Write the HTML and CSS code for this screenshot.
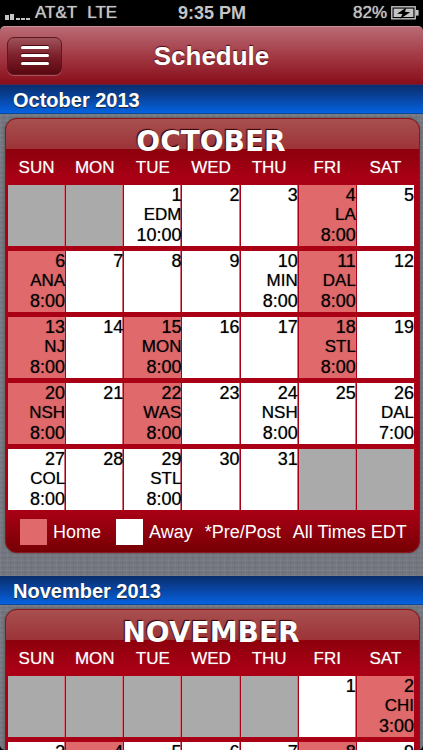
FILE: index.html
```
<!doctype html>
<html lang="en">
	<head>
		<meta charset="utf-8">
		<meta name="viewport" content="width=device-width, initial-scale=1">
		<title>Schedule</title>
		<link rel="stylesheet" href="styles.css">
	</head>
	<body>
		<div id="statusbar">
			<div class="carrier">
				<svg width="26" height="8" viewBox="0 0 26 8" fill="#c4c4c4">
					<rect x="0" y="1" width="4" height="5"/>
					<rect x="5" y="0" width="4" height="6"/>
					<rect x="11" y="4" width="4" height="2"/>
					<rect x="16" y="4" width="4" height="2"/>
					<rect x="21" y="4" width="4" height="2"/>
				</svg>
				<span>AT&amp;T</span>
				<span class="network">LTE</span>
			</div>
			<span class="clock">9:35 PM</span>
			<div class="battery">
				<span>82%</span>
				<svg width="28" height="14" viewBox="0 0 28 14">
					<rect x="0.8" y="0.8" width="23.4" height="12" fill="none" stroke="#c4c4c4" stroke-width="1.4"/>
					<path d="M25 4h2.6v5.6H25z" fill="#c4c4c4"/>
					<rect x="2.6" y="2.6" width="19.8" height="8.4" fill="#c4c4c4"/>
					<path d="M15.5 1.6L6 7.8l5.4.3-2.2 4.6 10-6.5-5.4-.4z" fill="#000"/>
				</svg>
			</div>
		</div>

		<header id="navbar">
			<button id="menu" aria-label="Menu"><span></span><span></span><span></span></button>
			<h1>Schedule</h1>
		</header>

		<main>
			<h2>October 2013</h2>
			<div class="card">
				<table>
					<caption>OCTOBER</caption>
					<thead>
						<tr><th>SUN</th><th>MON</th><th>TUE</th><th>WED</th><th>THU</th><th>FRI</th><th>SAT</th></tr>
					</thead>
					<tbody>
						<tr>
							<td class="empty"></td>
							<td class="empty"></td>
							<td>1<div class="team">EDM</div>10:00</td>
							<td>2</td>
							<td>3</td>
							<td class="home">4<div class="team">LA</div>8:00</td>
							<td>5</td>
						</tr>
						<tr>
							<td class="home">6<div class="team">ANA</div>8:00</td>
							<td>7</td>
							<td>8</td>
							<td>9</td>
							<td>10<div class="team">MIN</div>8:00</td>
							<td class="home">11<div class="team">DAL</div>8:00</td>
							<td>12</td>
						</tr>
						<tr>
							<td class="home">13<div class="team">NJ</div>8:00</td>
							<td>14</td>
							<td class="home">15<div class="team">MON</div>8:00</td>
							<td>16</td>
							<td>17</td>
							<td class="home">18<div class="team">STL</div>8:00</td>
							<td>19</td>
						</tr>
						<tr>
							<td class="home">20<div class="team">NSH</div>8:00</td>
							<td>21</td>
							<td class="home">22<div class="team">WAS</div>8:00</td>
							<td>23</td>
							<td>24<div class="team">NSH</div>8:00</td>
							<td>25</td>
							<td>26<div class="team">DAL</div>7:00</td>
						</tr>
						<tr>
							<td>27<div class="team">COL</div>8:00</td>
							<td>28</td>
							<td>29<div class="team">STL</div>8:00</td>
							<td>30</td>
							<td>31</td>
							<td class="empty"></td>
							<td class="empty"></td>
						</tr>
					</tbody>
				</table>
				<div class="legend">
					<span class="swatch home"></span>
					<span>Home</span>
					<span class="swatch away"></span>
					<span>Away</span>
					<span class="note">*Pre/Post</span>
					<span class="note">All Times EDT</span>
				</div>
			</div>

			<h2>November 2013</h2>
			<div class="card">
				<table>
					<caption>NOVEMBER</caption>
					<thead>
						<tr><th>SUN</th><th>MON</th><th>TUE</th><th>WED</th><th>THU</th><th>FRI</th><th>SAT</th></tr>
					</thead>
					<tbody>
						<tr>
							<td class="empty"></td>
							<td class="empty"></td>
							<td class="empty"></td>
							<td class="empty"></td>
							<td class="empty"></td>
							<td>1</td>
							<td class="home">2<div class="team">CHI</div>3:00</td>
						</tr>
						<tr>
							<td>3</td>
							<td class="home">4</td>
							<td>5</td>
							<td>6</td>
							<td>7</td>
							<td class="home">8</td>
							<td>9</td>
						</tr>
					</tbody>
				</table>
			</div>
		</main>
	</body>
</html>
```

FILE: styles.css
```
* {
	box-sizing: border-box;
}

html, body {
	margin: 0;
	padding: 0;
	height: 100%;
	background: #000;
	font-family: "Liberation Sans", Arial, sans-serif;
}

body {
	display: flex;
	flex-direction: column;
	overflow: hidden;
}

/* status bar */
#statusbar {
	flex: none;
	height: 26px;
	padding: 0 4px 0 5px;
	display: grid;
	grid-template-columns: 1fr auto 1fr;
	align-items: center;
	color: #c4c4c4;
	font-size: 17px;
	text-shadow: 0 0 1px #c4c4c4;
}

.carrier, .battery {
	display: flex;
	align-items: center;
	gap: 4px;
}

.carrier svg {
	align-self: flex-end;
	margin-bottom: 1px;
}

.network {
	margin-left: 6px;
}

.clock {
	font-size: 18px;
	font-weight: bold;
	text-shadow: none;
}

.battery {
	justify-content: flex-end;
}

/* title bar */
#navbar {
	flex: none;
	height: 59px;
	padding: 0 7px;
	display: grid;
	grid-template-columns: 1fr auto 1fr;
	align-items: center;
	background: linear-gradient(#b96a74, #a23a45 50%, #880e1a);
	border-top: 1px solid #c8949a;
	border-bottom: 1px solid #5d2350;
	border-radius: 5px 5px 0 0;
}

#navbar h1 {
	grid-column: 2;
	margin: 0;
	color: #fff;
	font-size: 26px;
	line-height: 30px;
	text-shadow: 0 -1px 1px #4c0a12;
}

#menu {
	width: 55px;
	height: 38px;
	padding: 0;
	display: flex;
	flex-direction: column;
	align-items: center;
	justify-content: center;
	gap: 5px;
	background: linear-gradient(#a0525b, #7c1f2a 50%, #5a0710);
	border: 1px solid #5c1821;
	border-radius: 7px;
	box-shadow: 0 1px 0 #b0505a;
}

#menu span {
	width: 28px;
	height: 3px;
	background: #fff;
	border-radius: 2px;
	box-shadow: 0 -1px 0 #4c0a12;
}

/* linen behind the cards */
main {
	flex: 1;
	min-height: 0;
	overflow: hidden;
	background:
		repeating-linear-gradient(90deg, rgba(255, 255, 255, .04) 0 1px, transparent 1px 3px, rgba(0, 0, 0, .04) 3px 4px, transparent 4px 7px),
		repeating-linear-gradient(rgba(255, 255, 255, .04) 0 1px, transparent 1px 2px, rgba(0, 0, 0, .04) 2px 3px, transparent 3px 5px),
		#74777f;
	border-radius: 0 0 5px 5px;
}

h2 {
	height: 29px;
	margin: 0;
	padding-left: 13px;
	background: linear-gradient(#0a2e6c, #0846a4 50%, #0562e0);
	border-bottom: 1px solid #0c4798;
	color: #fff;
	font-size: 20px;
	line-height: 30px;
	text-shadow: 0 1px 1px #222;
}

.card {
	margin: 4px 3px 23px 5px;
	padding: 0 4px 0 1px;
	background:
		linear-gradient(#a85050, #9c3338) 0 0 / 100% 30px no-repeat,
		linear-gradient(#8c000c, #aa0016) 0 30px / 100% 30px no-repeat,
		linear-gradient(#aa0016, #760004) 0 100% / 100% 42px no-repeat,
		#aa0016;
	border: 1px solid #8c1620;
	border-radius: 12px;
	box-shadow: 0 0 2px #444;
}

table {
	width: 100%;
	table-layout: fixed;
	border-spacing: 1px 5px;
}

caption {
	height: 34px;
	padding-top: 12px;
	color: #fff;
	font-family: "DejaVu Sans", Verdana, sans-serif;
	font-size: 28px;
	font-weight: bold;
	line-height: 22px;
	text-shadow: -1px -1px 1px #300;
}

th {
	height: 22px;
	padding: 0;
	color: #fff;
	font-size: 17px;
	font-weight: normal;
	line-height: 20px;
	text-shadow: 0 0 1px rgba(255, 255, 255, .5);
	vertical-align: top;
}

td {
	height: 61px;
	padding: 0;
	background: #fff;
	box-shadow: inset -1px 0 #d8707c;
	color: #000;
	font-size: 18px;
	line-height: 20px;
	text-align: right;
	text-shadow: 0 0 1px rgba(0, 0, 0, .5);
	vertical-align: top;
}

td:last-child {
	box-shadow: none;
}

.team {
	font-size: 17px;
}

.home {
	background-color: #df696b;
}

.away {
	background-color: #fff;
}

.empty {
	background-color: #aaa;
}

.legend {
	height: 37px;
	padding: 0 0 4px 13px;
	display: flex;
	align-items: center;
	color: #fff;
	font-size: 18px;
	line-height: 20px;
	white-space: nowrap;
}

.swatch {
	flex: none;
	width: 27px;
	height: 26px;
	margin-right: 6px;
}

.swatch.away {
	margin-left: 15px;
}

.note {
	margin-left: 12px;
}
```
